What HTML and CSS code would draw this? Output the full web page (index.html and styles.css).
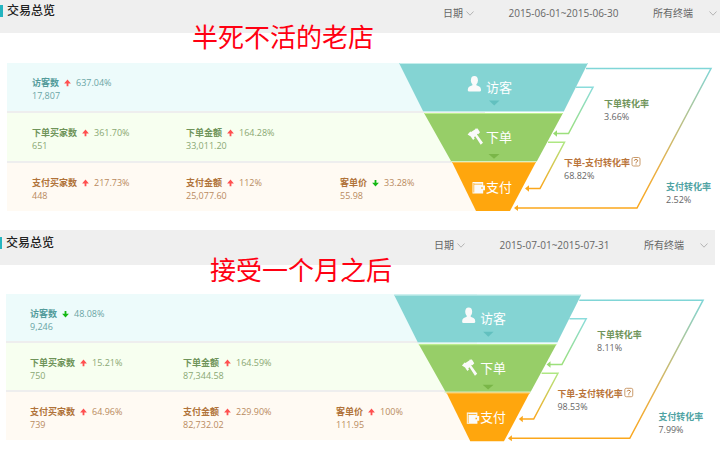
FILE: index.html
```html
<!DOCTYPE html>
<html lang="zh-CN">
<head>
    <meta charset="UTF-8">
    <title>交易总览</title>
    <link rel="stylesheet" href="styles.css">
</head>
<body>
    <!-- shared shapes -->
    <svg class="defs" width="0" height="0" aria-hidden="true">
        <defs>
            <linearGradient id="teal-green" gradientUnits="userSpaceOnUse" x1="0" y1="25" x2="0" y2="71">
                <stop offset="0" stop-color="#8adcdc"/><stop offset="1" stop-color="#9ce07c"/>
            </linearGradient>
            <linearGradient id="green-orange" gradientUnits="userSpaceOnUse" x1="0" y1="80" x2="0" y2="126">
                <stop offset="0" stop-color="#aee884"/><stop offset="1" stop-color="#fba71c"/>
            </linearGradient>
            <linearGradient id="teal-orange" gradientUnits="userSpaceOnUse" x1="0" y1="6" x2="0" y2="146">
                <stop offset="0" stop-color="#7fd6d8"/><stop offset="0.7" stop-color="#e8b048"/><stop offset="1" stop-color="#fba71c"/>
            </linearGradient>
            <symbol id="up" viewBox="0 0 7 8"><path d="M3.5 0.6 6.9 4.4H4.4V7.2H2.6V4.4H0.1Z"/></symbol>
            <symbol id="down" viewBox="0 0 7 8"><path d="M3.5 7.6 6.9 3.8H4.4V1H2.6V3.8H0.1Z"/></symbol>
            <symbol id="chevron" viewBox="0 0 8 5"><path d="M0.5 0.5 4 4.2 7.5 0.5" fill="none" stroke="#b4b4b4"/></symbol>
            <g id="funnel-shapes">
                <path fill="#84d4d3" d="M0 1H189L165 49H24Z"/>
                <path fill="none" stroke="#c4eeec" d="M0.5 1.5H188.5M24 49.5H165"/>
                <path fill="#97ce68" d="M25 51H164L138 99H52Z"/>
                <path fill="none" stroke="#bdf08e" d="M25 51.5H164"/>
                <path fill="none" stroke="#d6f0c0" d="M51 99.5H138"/>
                <path fill="#ffa60d" d="M53 100H137L111 149H77Z"/>
                <path fill="none" stroke="#ffc14a" d="M53 100.5H137"/>
                <path fill="#62c0bf" d="M90 38.5H100.500L95.200 43.500Z"/>
                <path fill="#7ab648" d="M89.500 92H100.500L95 96.800Z"/>
                <!-- visitor -->
                <g fill="#fafafa">
                    <ellipse cx="75.400" cy="18.300" rx="3.500" ry="4.300"/>
                    <path d="M73.400 21H77.400V23.300L80.300 24.500Q82 25.300 82 27.500V28.600Q82 29.600 80.600 29.600H70.200Q68.800 29.600 68.800 28.600V27.500Q68.800 25.300 70.500 24.500L73.400 23.300Z"/>
                </g>
                <!-- hammer -->
                <path fill="#fafafa" d="M68.600 72.400 71.300 69.500 72.100 70 76.300 67.300 76 66.700 78.600 66.400 81 70.200 79.200 72.200 78.600 71.700 78 72.500 84 80.700 81.700 82.800 76.200 74.300 75 75.300 75.700 76.500 74.100 78.100 71.700 74.600Z"/>
                <!-- wallet -->
                <path fill="#fafafa" fill-rule="evenodd" d="M73.500 120H84.200V123.500H86V128.200H84.200V131.400H73.500ZM74.500 121V130.400H75.200V122.500H83.200V121.700H75.200V121ZM82.300 125.300V126.700H83.700V125.300Z"/>
                <!-- connectors -->
                <g fill="none" stroke-width="1.500">
                    <path stroke="url(#teal-orange)" d="M187 6.500H312L238 146H118"/>
                    <path stroke="url(#teal-green)" d="M177 25.300H194L169.500 71.500H157"/>
                    <path stroke="url(#green-orange)" d="M149 80.300H165.500L141 126.500H129"/>
                </g>
                <path fill="#fba71c" d="M115 146 119 143V149ZM126 126.500 130 123.300V129.700Z"/>
                <path fill="#97da70" d="M154 71.500 158 68.300V74.700Z"/>
                <!-- help mark -->
                <rect x="233" y="95.500" width="8" height="8.500" rx="1.500" fill="none" stroke="#c99a6a"/>
                <path fill="none" stroke="#b9793c" d="M235.300 98.700Q235.400 97.500 237 97.500T238.700 98.800Q238.600 99.500 237.700 99.900 237 100.200 237 101M237 101.600V102.500"/>
            </g>
        </defs>
    </svg>

    <section class="panel">
        <header class="bar">
            <h2 class="title">交易总览</h2>
            <div class="filters">
                <label class="picker picker-date">
                    <select aria-label="日期"><option>日期</option></select>
                    <svg class="chevron"><use href="#chevron"/></svg>
                </label>
                <button class="range" type="button">2015-06-01~2015-06-30</button>
                <label class="picker picker-device">
                    <select aria-label="终端"><option>所有终端</option></select>
                    <svg class="chevron"><use href="#chevron"/></svg>
                </label>
            </div>
            <p class="caption">半死不活的老店</p>
        </header>
        <div class="chart">
            <div class="steps">
                <div class="step visit">
                    <div class="metric">
                        <div class="line"><b>访客数</b><svg class="trend up"><use href="#up"/></svg><span>637.04%</span></div>
                        <div>17,807</div>
                    </div>
                </div>
                <div class="step order">
                    <div class="metric">
                        <div class="line"><b>下单买家数</b><svg class="trend up"><use href="#up"/></svg><span>361.70%</span></div>
                        <div>651</div>
                    </div>
                    <div class="metric">
                        <div class="line"><b>下单金额</b><svg class="trend up"><use href="#up"/></svg><span>164.28%</span></div>
                        <div>33,011.20</div>
                    </div>
                </div>
                <div class="step pay">
                    <div class="metric">
                        <div class="line"><b>支付买家数</b><svg class="trend up"><use href="#up"/></svg><span>217.73%</span></div>
                        <div>448</div>
                    </div>
                    <div class="metric">
                        <div class="line"><b>支付金额</b><svg class="trend up"><use href="#up"/></svg><span>112%</span></div>
                        <div>25,077.60</div>
                    </div>
                    <div class="metric">
                        <div class="line"><b>客单价</b><svg class="trend down"><use href="#down"/></svg><span>33.28%</span></div>
                        <div>55.98</div>
                    </div>
                </div>
            </div>
            <svg class="funnel" viewBox="0 1 321 148">
                <use href="#funnel-shapes"/>
                <text class="stage" x="87" y="30">访客</text>
                <text class="stage" x="87" y="80">下单</text>
                <text class="stage" x="87" y="130">支付</text>
                <text class="rate rate-order" x="205" y="45">下单转化率</text>
                <text class="num" x="205" y="58">3.66%</text>
                <text class="rate rate-pay" x="165" y="104">下单-支付转化率</text>
                <text class="num" x="165" y="117">68.82%</text>
                <text class="rate rate-all" x="267" y="128">支付转化率</text>
                <text class="num" x="267" y="141">2.52%</text>
            </svg>
        </div>
    </section>

    <section class="panel panel-after">
        <header class="bar">
            <h2 class="title">交易总览</h2>
            <div class="filters">
                <label class="picker picker-date">
                    <select aria-label="日期"><option>日期</option></select>
                    <svg class="chevron"><use href="#chevron"/></svg>
                </label>
                <button class="range" type="button">2015-07-01~2015-07-31</button>
                <label class="picker picker-device">
                    <select aria-label="终端"><option>所有终端</option></select>
                    <svg class="chevron"><use href="#chevron"/></svg>
                </label>
            </div>
            <p class="caption">接受一个月之后</p>
        </header>
        <div class="chart">
            <div class="steps">
                <div class="step visit">
                    <div class="metric">
                        <div class="line"><b>访客数</b><svg class="trend down"><use href="#down"/></svg><span>48.08%</span></div>
                        <div>9,246</div>
                    </div>
                </div>
                <div class="step order">
                    <div class="metric">
                        <div class="line"><b>下单买家数</b><svg class="trend up"><use href="#up"/></svg><span>15.21%</span></div>
                        <div>750</div>
                    </div>
                    <div class="metric">
                        <div class="line"><b>下单金额</b><svg class="trend up"><use href="#up"/></svg><span>164.59%</span></div>
                        <div>87,344.58</div>
                    </div>
                </div>
                <div class="step pay">
                    <div class="metric">
                        <div class="line"><b>支付买家数</b><svg class="trend up"><use href="#up"/></svg><span>64.96%</span></div>
                        <div>739</div>
                    </div>
                    <div class="metric">
                        <div class="line"><b>支付金额</b><svg class="trend up"><use href="#up"/></svg><span>229.90%</span></div>
                        <div>82,732.02</div>
                    </div>
                    <div class="metric">
                        <div class="line"><b>客单价</b><svg class="trend up"><use href="#up"/></svg><span>100%</span></div>
                        <div>111.95</div>
                    </div>
                </div>
            </div>
            <svg class="funnel" viewBox="0 1 321 148">
                <use href="#funnel-shapes"/>
                <text class="stage" x="87" y="30">访客</text>
                <text class="stage" x="87" y="80">下单</text>
                <text class="stage" x="87" y="130">支付</text>
                <text class="rate rate-order" x="205" y="45">下单转化率</text>
                <text class="num" x="205" y="58">8.11%</text>
                <text class="rate rate-pay" x="165" y="104">下单-支付转化率</text>
                <text class="num" x="165" y="117">98.53%</text>
                <text class="rate rate-all" x="267" y="128">支付转化率</text>
                <text class="num" x="267" y="141">7.99%</text>
            </svg>
        </div>
    </section>
</body>
</html>
```

FILE: styles.css
```css
body { margin: 0; background: #fff; font-family: "Open Sans", "Noto Sans CJK SC", sans-serif; font-size: 9px; line-height: 13px; }
.defs { position: absolute; }

.panel { margin-bottom: 19px; }
.panel-after { margin: 0 5px 0 0; }

/* header */
.bar { position: relative; display: flex; align-items: flex-start; justify-content: space-between; box-sizing: border-box; min-height: 33px; padding: 5px 3px 0 0; background: #efefef; }
.panel-after .bar { min-height: 35px; padding: 7px 7px 0 0; }
.title { margin: 0; padding-left: 4px; border-left: 3px solid #24b4c0; font-size: 12px; font-weight: 500; line-height: 12px; color: #222; }
.panel-after .title { border-left-width: 2px; }
.filters { display: flex; gap: 32px; padding-top: 1px; }
.picker { position: relative; display: block; }
.picker-date { width: 31px; }
.picker-device { width: 64px; }
.picker select { display: block; width: 100%; margin: 0; padding: 0; border: 0; appearance: none; background: none; font: inherit; font-size: 10px; line-height: 14px; color: #666; }
.range { width: 115px; padding: 0; border: 0; background: none; font: inherit; font-size: 10px; line-height: 14px; color: #666; white-space: nowrap; cursor: pointer; }
.chevron { position: absolute; right: 0; top: 5px; width: 8px; height: 5px; pointer-events: none; }
.caption { position: absolute; left: 192px; top: 20px; margin: 0; font-family: "Noto Sans CJK SC", sans-serif; font-size: 26px; line-height: 32px; color: #ff0012; }
.panel-after .caption { left: 210px; top: 23px; }

/* funnel chart */
.chart { display: grid; grid-template-columns: minmax(0, 1fr) 321px; margin: 30px 0 0 7px; }
.panel-after .chart { margin: 29px 3px 0 6px; grid-template-columns: minmax(0, 1fr) 318px; }
.steps { grid-column: 1 / 3; grid-row: 1; margin-right: 235px; }
.funnel { grid-column: 2; grid-row: 1; width: 100%; height: 148px; }
.step { display: grid; grid-template-columns: repeat(3, 154px); padding: 13px 0 9px 25px; border-bottom: 2px solid #eee; }
.panel-after .step { grid-template-columns: repeat(3, 153px); padding: 13px 0 8px 24px; }
.panel .step:last-child { padding-bottom: 9px; border-bottom: 0; }
.visit { background: #edfbfb; color: #6aa5a5; }
.order { background: #f7fff0; color: #8aa873; }
.pay { background: #fffaf3; color: #b98a5e; }
.visit b { color: #549c9b; }
.order b { color: #6f945a; }
.pay b { color: #b0733a; }
.line { display: flex; align-items: center; gap: 5px; }
.trend { width: 7px; height: 8px; }
.up { fill: #ff5050; }
.down { fill: #14b814; }

.stage { font-size: 13px; fill: #fff; }
.rate { font-size: 9px; font-weight: bold; }
.rate-order { fill: #6f945a; }
.rate-pay { fill: #b9743a; }
.rate-all { fill: #4fa3a3; }
.num { font-size: 9px; fill: #666; }
```
